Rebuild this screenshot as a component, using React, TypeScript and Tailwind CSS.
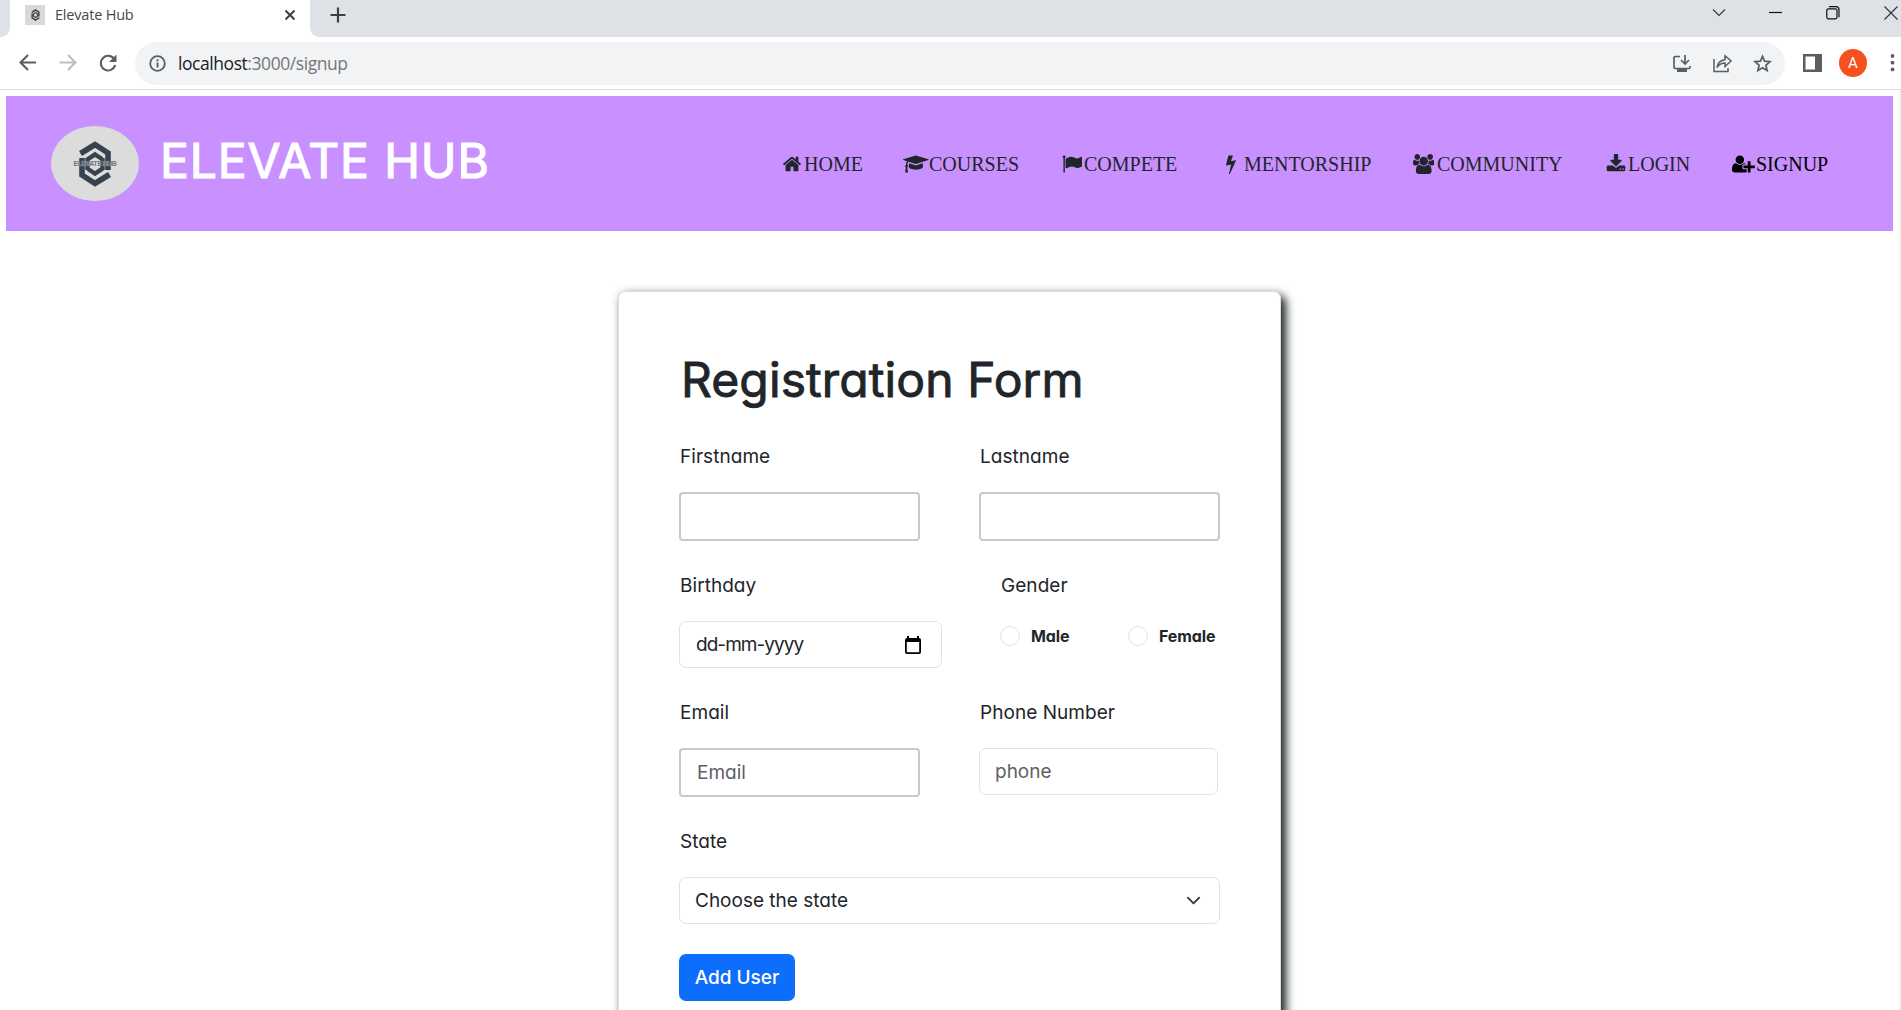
import React from "react";

const icons = {
  home: { w: 1792, d: "M1472 992v480q0 26-19 45t-45 19h-384v-384h-256v384h-384q-26 0-45-19t-19-45v-480q0-1 .5-3t.5-3l575-474 575 474q1 2 1 6zm223-69l-62 74q-8 9-21 11h-3q-13 0-21-7l-692-577-692 577q-12 8-24 7-13-2-21-11l-62-74q-8-10-7-23.5t11-21.5l719-599q32-26 76-26t76 26l244 204v-195q0-14 9-23t23-9h192q14 0 23 9t9 23v408l219 182q10 8 11 21.5t-7 23.5z" },
  cap: { w: 2304, d: "M1774 836l18 316q4 69-82 128t-235 93.5-323 34.5-323-34.5-235-93.5-82-128l18-316 574 181q22 7 48 7t48-7zm530-324q0 23-22 31l-1120 352q-4 1-10 1t-10-1l-652-206q-43 34-71 111.5t-34 178.5q63 36 63 109 0 69-58 107l58 433q2 14-8 25-9 11-24 11h-192q-15 0-24-11-10-11-8-25l58-433q-58-38-58-107 0-73 65-111 11-207 98-330l-333-104q-22-8-22-31t22-31l1120-352q4-1 10-1t10 1l1120 352q22 8 22 31z" },
  flag: { w: 1792, d: "M320 256q0 72-64 110v1266q0 13-9.5 22.5t-22.5 9.5h-64q-13 0-22.5-9.5t-9.5-22.5v-1266q-64-38-64-110 0-53 37.5-90.5t90.5-37.5 90.5 37.5 37.5 90.5zm1472 64v763q0 25-12.5 38.5t-39.5 27.5q-215 116-369 116-61 0-123.5-22t-108.5-48-115.5-48-142.5-22q-192 0-464 146-17 9-33 9-26 0-45-19t-19-45v-742q0-32 31-55 21-14 79-43 236-120 421-120 107 0 200 29t219 88q38 19 88 19 54 0 117.5-21t110-47 88-47 54.500-21q26 0 45 19t19 45z" },
  bolt: { w: 1792, d: "M1333 566q18 20 7 44l-540 1157q-13 25-42 25-4 0-14-2-17-5-25.5-19t-4.5-30l197-808-406 101q-4 1-12 1-18 0-31-11-18-15-13-39l201-825q4-14 16-23t28-9h328q19 0 32 12.5t13 29.5q0 8-5 18l-171 463 396-98q8-2 12-2 19 0 34 15z" },
  users: { w: 1920, d: "M593 896q-162 5-265 128h-134q-82 0-138-40.5t-56-118.5q0-353 124-353 6 0 43.5 21t97.5 42.5 119 21.5q67 0 133-23-5 37-5 66 0 139 81 256zm1071 637q0 120-73 189.500t-194 69.500h-874q-121 0-194-69.500t-73-189.500q0-53 3.500-103.500t14-109 26.500-108.500 43-97.500 62-81 85.500-53.500 111.500-20q10 0 43 21.500t73 48 107 48 135 21.500 135-21.500 107-48 73-48 43-21.500q61 0 111.500 20t85.500 53.500 62 81 43 97.500 26.500 108.500 14 109 3.500 103.500zm-1024-1277q0 106-75 181t-181 75-181-75-75-181 75-181 181-75 181 75 75 181zm704 384q0 159-112.500 271.500t-271.500 112.500-271.500-112.500-112.500-271.500 112.500-271.500 271.500-112.500 271.500 112.500 112.500 271.500zm576 225q0 78-56 118.500t-138 40.500h-134q-103-123-265-128 81-117 81-256 0-29-5-66 66 23 133 23 59 0 119-21.500t97.500-42.500 43.500-21q124 0 124 353zm-128-609q0 106-75 181t-181 75-181-75-75-181 75-181 181-75 181 75 75 181z" },
  download: { w: 1792, d: "M1344 1344q0-26-19-45t-45-19-45 19-19 45 19 45 45 19 45-19 19-45zm256 0q0-26-19-45t-45-19-45 19-19 45 19 45 45 19 45-19 19-45zm128-224v320q0 40-28 68t-68 28h-1472q-40 0-68-28t-28-68v-320q0-40 28-68t68-28h465l135 136q58 56 136 56t136-56l136-136h464q40 0 68 28t28 68zm-325-569q17 41-14 70l-448 448q-18 19-45 19t-45-19l-448-448q-31-29-14-70 17-39 59-39h256v-448q0-26 19-45t45-19h256q26 0 45 19t19 45v448h256q42 0 59 39z" },
  userPlus: { w: 2048, d: "M704 896q-159 0-271.5-112.5t-112.5-271.500 112.500-271.500 271.500-112.500 271.500 112.500 112.500 271.500-112.500 271.500-271.500 112.500zm960 128h352q13 0 22.500 9.500t9.500 22.500v192q0 13-9.500 22.500t-22.500 9.500h-352v352q0 13-9.500 22.500t-22.500 9.500h-192q-13 0-22.500-9.500t-9.500-22.500v-352h-352q-13 0-22.500-9.500t-9.500-22.500v-192q0-13 9.500-22.500t22.500-9.500h352v-352q0-13 9.500-22.500t22.500-9.500h192q13 0 22.500 9.500t9.500 22.500v352zm-736 224q0 52 38 90t90 38h256v238q-68 50-171 50h-874q-121 0-194-69t-73-190q0-53 3.500-103.500t14-109 26.500-108.500 43-97.500 62-81 85.500-53.500 111.500-20q19 0 39 17 79 61 154.500 91.500t164.500 30.500 164.500-30.500 154.500-91.500q20-17 39-17 132 0 217 96h-223q-52 0-90 38t-38 90v192z" },
};

const nav: { label: string; icon: keyof typeof icons; cls: string; gap: string }[] = [
  { label: "HOME", icon: "home", cls: "w-[121px]", gap: "w-[22px]" },
  { label: "COURSES", icon: "cap", cls: "w-[159px]", gap: "w-[26px]" },
  { label: "COMPETE", icon: "flag", cls: "w-[159px]", gap: "w-[22px]" },
  { label: "MENTORSHIP", icon: "bolt", cls: "w-[192px]", gap: "w-[23px]" },
  { label: "COMMUNITY", icon: "users", cls: "w-[193px]", gap: "w-[24px]" },
  { label: "LOGIN", icon: "download", cls: "w-[126px]", gap: "w-[22px]" },
  { label: "SIGNUP", icon: "userPlus", cls: "w-[96px]", gap: "w-[24px]" },
];

function NavIcon({ name }: { name: keyof typeof icons }) {
  const { w, d } = icons[name];
  return (
    <svg className="h-5 w-auto shrink-0" viewBox={`0 0 ${w} 1792`} fill="currentColor">
      <path d={d} />
    </svg>
  );
}

function Emblem({ className }: { className: string }) {
  return (
    <svg className={className} viewBox="0 0 32 46" fill="none" stroke="#37424f" strokeWidth="5.600">
      <path d="M1.500 12.500L16 3.500l13 8.500V29M30.500 33.500l-14.500 9-13-8.500V17" />
      <path d="M8.500 29V18.500l7.500-5 7 4.500M23.500 17v10.500l-7.500 5-7-4.500" strokeWidth="4.400" />
    </svg>
  );
}

function WindowTabs() {
  return (
    <div className="flex h-[37px] bg-[#dee1e6]">
      <div className="w-[10px] bg-white">
        <div className="h-full rounded-br-[9px] bg-[#dee1e6]" />
      </div>
      <div className="flex w-[300px] items-start bg-white pl-[15px]">
        <div className="mt-[5px] flex size-5 items-center justify-center bg-[#d9d9d9]">
          <Emblem className="h-3 w-[9px]" />
        </div>
        <span className="ml-[10px] mt-[5px] w-[80px] whitespace-nowrap font-['Open_Sans'] text-[14.500px] leading-5 tracking-[-0.2px] text-[#45494d]">Elevate Hub</span>
        <svg className="ml-[149px] mt-[9px] size-3" viewBox="0 0 12 12" stroke="#3c4043" strokeWidth="2"><path d="M1.500 1.500l9 9m0-9l-9 9" /></svg>
      </div>
      <div className="w-[10px] bg-white">
        <div className="h-full rounded-bl-[9px] bg-[#dee1e6]" />
      </div>
      <svg className="ml-[10px] mt-[7px] size-4" viewBox="0 0 16 16" stroke="#3c4043" strokeWidth="2.200"><path d="M8 .5v15M.5 8h15" /></svg>
      <div className="ml-auto flex pt-[6px]">
        <svg className="mr-[43px] h-[14px] w-[14px]" viewBox="0 0 14 14" fill="none" stroke="#333" strokeWidth="1.100"><path d="M1 3.500l6 6 6-6" /></svg>
        <svg className="mr-[43px] h-[14px] w-[14px]" viewBox="0 0 14 14" stroke="#111" strokeWidth="1.200"><path d="M0 6.500h13" /></svg>
        <svg className="mr-[44px] h-[14px] w-[14px]" viewBox="0 0 14 14" fill="none" stroke="#111" strokeWidth="1.200"><rect x=".8" y="2.800" width="10.200" height="10" rx="1.500" /><path d="M3 .7h7q3 0 3 3v7.500" /></svg>
        <svg className="mr-[3px] h-[14px] w-[14px]" viewBox="0 0 14 14" stroke="#333" strokeWidth="1.200"><path d="M.5.500l13 13m0-13l-13 13" /></svg>
      </div>
    </div>
  );
}

function AddressBar() {
  return (
    <div className="flex h-[53px] items-start border-b border-[#dadce0] bg-white pl-[19px]">
      <svg className="mt-[17px] size-[18px]" viewBox="0 0 18 18" fill="none" stroke="#5a5e62" strokeWidth="2"><path d="M17 8.500H2M9 1L1.500 8.500 9 16" /></svg>
      <svg className="ml-[22px] mt-[17px] size-[18px]" viewBox="0 0 18 18" fill="none" stroke="#bbbdbf" strokeWidth="2"><path d="M.5 8.500H16M9 1l7.500 7.500L9 16" /></svg>
      <svg className="ml-[22px] mt-[17px] size-[18px]" viewBox="0 0 18 18"><path d="M15.500 5.500A7.300 7.300 0 1 0 16.200 11" fill="none" stroke="#5a5e62" strokeWidth="2.100" /><path d="M17.500.500v7.500H10z" fill="#5a5e62" /></svg>
      <div className="ml-[18px] mt-[5px] flex h-[43px] w-[1650px] items-center rounded-full bg-[#f1f3f4] pl-[14px]">
        <svg className="size-[17px]" viewBox="0 0 17 17"><circle cx="8.500" cy="8.500" r="7.300" fill="none" stroke="#5a5e62" strokeWidth="1.800" /><path d="M8.500 7.500v5M8.500 4.300v1.900" stroke="#5a5e62" strokeWidth="1.900" /></svg>
        <span className="ml-[12px] mt-[-2px] whitespace-nowrap font-['Open_Sans'] text-[17.500px] leading-6 tracking-[-0.440px] text-[#74777b]"><span className="text-[#202124]">localhost</span>:3000/signup</span>
        <div className="ml-auto mr-[13px] flex items-center">
          <svg className="size-[18px]" viewBox="0 0 18 18" fill="none" stroke="#5a5e62" strokeWidth="1.700"><path d="M7 1.500H2.200Q1 1.500 1 2.700v9.600q0 1.200 1.200 1.200h13.600q1.200 0 1.200-1.200V11M12 0v8.500M8 5l4 4 4-4" /><path d="M4 15.500h10" strokeWidth="3" /></svg>
          <svg className="ml-[22px] size-[19px]" viewBox="0 0 19 19" fill="none" stroke="#5a5e62" strokeWidth="1.500"><path d="M1 5v12.500h14V14M4 13.500q1-7 8-7.800V1.800L18 7l-6 5.500V9q-5 0-8 4.500z" /></svg>
          <svg className="ml-[21px] size-[19px]" viewBox="0 0 24 24" fill="none" stroke="#5a5e62" strokeWidth="2.200"><path d="M12 3l2.600 6.100 6.800.600-5.100 4.500 1.500 6.600L12 17.300l-5.800 3.500 1.500-6.600-5.100-4.500 6.800-.600z" /></svg>
        </div>
      </div>
      <svg className="ml-[18px] mt-[17px] h-[18px] w-[19px]" viewBox="0 0 19 18"><path fill="#5a5e62" fillRule="evenodd" d="M0 0h19v18H0zM2.500 2.500v13H12v-13z" /></svg>
      <div className="ml-[17px] mt-[12px] flex size-7 items-center justify-center rounded-full bg-[#f4511e] font-['Roboto'] text-[15px] text-white">A</div>
      <svg className="ml-[23px] mt-[17px] h-[18px] w-[5px]" viewBox="0 0 5 18" fill="#5a5e62"><circle cx="2.500" cy="2" r="1.900" /><circle cx="2.500" cy="8.700" r="1.900" /><circle cx="2.500" cy="15.400" r="1.900" /></svg>
    </div>
  );
}

function Header() {
  return (
    <header className="mx-[6px] mt-[6px] flex h-[135px] w-[1887px] bg-[#c991ff]">
      <div className="ml-[45px] mt-[30px] flex h-[75px] w-[88px] items-center justify-center rounded-[50%] bg-[#dcdcdc]">
        <div className="grid place-items-center">
          <Emblem className="col-start-1 row-start-1 h-[46px] w-8" />
          <span className="col-start-1 row-start-1 whitespace-nowrap font-['Liberation_Sans'] text-[7px] font-bold leading-[8px] tracking-[-0.5px] text-[#707780] [text-shadow:0_0_1px_#dcdcdc]">ELEVATE HUB</span>
        </div>
      </div>
      <h1 className="ml-[20px] mt-[35px] w-[340px] whitespace-nowrap pl-px font-['Inter'] text-[48px] font-normal leading-[60px] tracking-[0.9px] text-white [-webkit-text-stroke:1.200px_white]">ELEVATE HUB</h1>
      <nav className="ml-[283px] mt-[58px] flex h-5 font-['Liberation_Serif'] text-[20px] leading-[20px] text-[#212529]">
        {nav.map((n) => (
          <a key={n.label} className={`flex shrink-0 whitespace-nowrap last:text-black ${n.cls}`}>
            <span className={`flex shrink-0 ${n.gap}`}><NavIcon name={n.icon} /></span>
            {n.label}
          </a>
        ))}
      </nav>
    </header>
  );
}

function Label({ children }: { children: React.ReactNode }) {
  return <div className="h-[30px] whitespace-nowrap pl-px leading-[32px] tracking-[0.05px]">{children}</div>;
}

function Radio({ label }: { label: string }) {
  return (
    <div className="flex items-center">
      <span className="size-5 rounded-full border border-[#dee2e6]" />
      <span className="ml-[11px] text-[16px] font-bold leading-5 tracking-[-0.1px]">{label}</span>
    </div>
  );
}

function RegistrationForm() {
  return (
    <main className="ml-[618px] mt-[60px] h-[760px] w-[663px] rounded-[7px] border border-[#dcdddf] bg-white px-[60px] pt-[50px] font-['Inter'] text-[19px] font-normal text-[#212529] shadow-[5px_5px_10px_#212529,0_0_8px_rgba(33,37,41,0.15)] [font-feature-settings:'cv11']">
      <h2 className="h-[76px] whitespace-nowrap pl-[2px] text-[48px] leading-[75px] tracking-[0.1px] [-webkit-text-stroke:0.900px_#212529]">Registration Form</h2>
      <div className="mt-[23px] flex justify-between">
        <div className="w-[241px]">
          <Label>Firstname</Label>
          <div className="mt-[21px] h-[49px] rounded-[4px] border-2 border-[#c9c9c9]" />
        </div>
        <div className="w-[241px]">
          <Label>Lastname</Label>
          <div className="mt-[21px] h-[49px] rounded-[4px] border-2 border-[#c9c9c9]" />
        </div>
      </div>
      <div className="mt-[29px] flex h-[98px]">
        <div className="w-[263px]">
          <Label>Birthday</Label>
          <div className="mt-[21px] flex h-[47px] items-center justify-between rounded-[7px] border border-[#dee2e6] pl-[16px] pr-[20px]">
            <span className="pt-0.5 tracking-[-0.95px]">dd-mm-yyyy</span>
            <svg className="h-[18px] w-4" viewBox="0 0 16 18"><path fill="#000" fillRule="evenodd" d="M2 0h2v2h8V0h2v2q2 0 2 2v12q0 2-2 2H2q-2 0-2-2V4q0-2 2-2zM1.800 6v10.200h12.400V6z" /></svg>
          </div>
        </div>
        <div className="ml-[58px]">
          <Label>Gender</Label>
          <div className="mt-[26px] flex">
            <div className="w-[128px]"><Radio label="Male" /></div>
            <Radio label="Female" />
          </div>
        </div>
      </div>
      <div className="mt-[29px] flex h-[100px] justify-between">
        <div className="w-[241px]">
          <Label>Email</Label>
          <div className="mt-[21px] flex h-[49px] items-center rounded-[4px] border-2 border-[#c9c9c9] pl-4 pt-0.5 text-[#5c6166]">Email</div>
        </div>
        <div className="w-[241px]">
          <Label>Phone Number</Label>
          <div className="mt-[21px] flex h-[47px] w-[239px] items-center rounded-[7px] border border-[#dee2e6] pl-[15px] pt-0.5 text-[#5c6166]">phone</div>
        </div>
      </div>
      <div className="mt-[29px]">
        <Label>State</Label>
        <div className="mt-[21px] flex h-[47px] items-center justify-between rounded-[7px] border border-[#dee2e6] pl-[15px] pr-[18px]">
          <span className="pt-0.5">Choose the state</span>
          <svg className="h-[15px] w-[15px]" viewBox="0 0 16 16" fill="none" stroke="#343a40" strokeWidth="2" strokeLinecap="round" strokeLinejoin="round"><path d="M2 5l6 6 6-6" /></svg>
        </div>
      </div>
      <button className="mt-[30px] flex h-[47px] w-[116px] items-center justify-center whitespace-nowrap rounded-[7px] bg-[#0d6efd] pt-0.5 font-medium text-white">Add User</button>
    </main>
  );
}

export default function App() {
  return (
    <div className="h-[1010px] w-[1901px] overflow-hidden bg-white">
      <WindowTabs />
      <AddressBar />
      <div className="flex h-[920px]">
        <div className="w-[1899px] shrink-0 overflow-hidden">
          <Header />
          <RegistrationForm />
        </div>
        <div className="w-[2px] bg-[#f1f1f1]" />
      </div>
    </div>
  );
}
